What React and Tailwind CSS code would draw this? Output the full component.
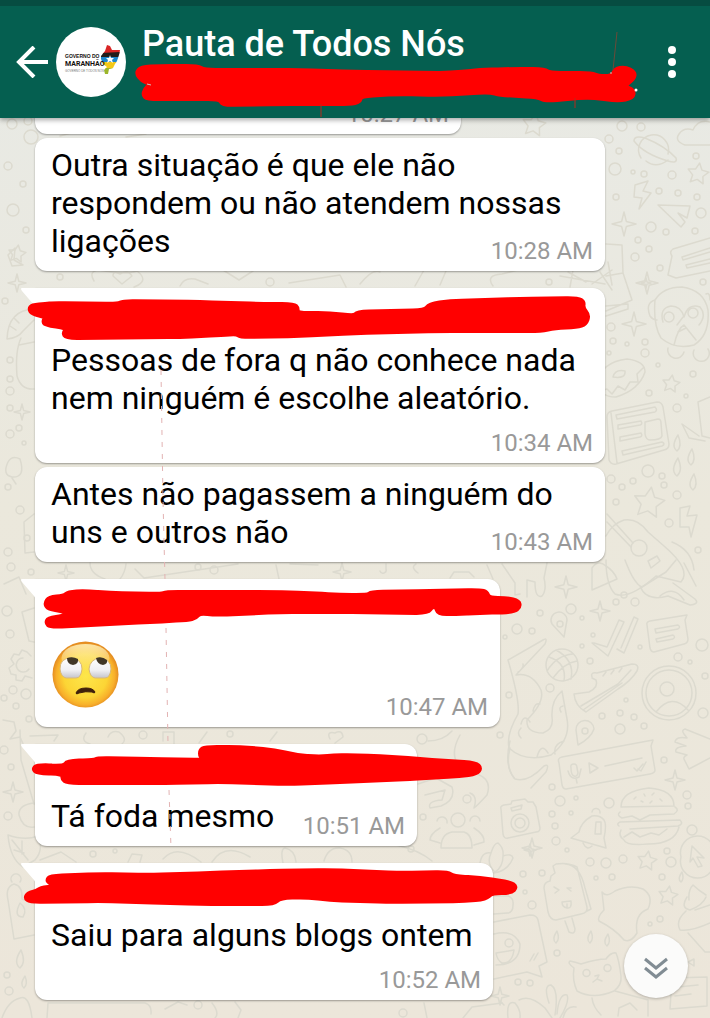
import React from 'react';

const CIRCLES = [
  [622,126,5],[641,127,4],[609,139,4],[619,151,3],[615,169,6],[633,172,2],[644,174,3],[672,175,4],[696,156,3],[659,191,3],[678,193,3],[616,197,3],[697,197,3],[701,213,5],[651,227,5],[666,232,3],[695,231,3],[638,240,3],[649,249,3],[635,257,4],[660,268,3],[703,282,3],[611,327,4],[627,344,2],[613,341,3],[645,342,3],[645,353,4],[609,353,2],[658,365,2],[693,374,3],[649,393,3],[686,396,2],[677,408,4],[648,471,6],[662,476,3],[611,479,4],[622,487,3],[633,481,3],[664,485,3],[677,495,4],[616,502,3],[669,523,4],[698,550,3],
  [624,595,3],[635,602,4],[616,602,3],[571,609,5],[540,613,3],[582,618,2],[517,629,5],[532,631,3],[505,637,2],[593,635,2],[640,647,2],[582,646,2],[590,661,3],[678,657,4],[690,662,2],[702,645,6],[550,688,4],[509,695,3],[626,700,2],[602,716,3],[620,713,3],[634,717,3],[620,729,5],[644,726,3],[703,713,5],[664,760,3],[552,787,3],[705,676,3],
  [560,801,5],[576,798,2],[609,803,5],[552,814,3],[571,813,2],[555,826,3],[556,841,4],[567,850,2],[523,874,3],[542,873,3],[590,862,4],[606,863,5],[623,859,4],[671,862,5],[667,851,3],[596,878,2],[612,877,3],[662,877,3],[532,905,4],[660,919,3],[650,924,2],[557,953,3],[518,982,3],[530,983,3],[687,795,4],[692,830,5],[688,806,3],
  [491,704,3],[417,709,3],[422,739,5],[500,735,3],[467,799,4],[423,817,3],[411,849,3],[525,892,2],
  [12,124,5],[28,121,4],[31,137,7],[8,166,4],[23,184,3],[13,210,6],[26,230,3],[5,301,3],[10,360,3],[10,379,3],[10,391,4],[10,408,3],[19,428,3],[10,434,4],[24,443,2],[8,487,3],[20,510,4],[27,538,3],[8,552,4],[11,567,4],[31,572,3],[7,611,5],[10,634,4],[13,690,4],[26,694,5],[4,698,3],[16,706,3],[29,719,3],[4,750,4],[11,767,3],[8,816,4],[7,975,3],[9,991,4],[93,854,3],[115,851,2],[198,567,3],[230,734,3],[214,570,4],[270,282,4],[549,282,3],[198,1005,4],[403,1013,4],[60,277,3],[143,735,4],
];
const SPARKS = [[624,224,12],[647,283,11],[634,324,12],[566,587,11],[600,611,10],[532,848,10],[675,780,10],[13,792,10],[17,283,9],[66,573,8],[342,572,9],[530,850,6],[500,996,9],[646,283,5],[22,412,8]];
const STARS = [[698,174,11],[671,384,9],[649,503,16],[647,861,10],[668,896,10],[534,125,12],[17,254,9]];
const DROPS = [[677,443,8],[677,467,9],[691,457,8],[693,482,8],[556,937,6],[590,937,6],[607,940,6],[681,877,5],[20,959,9],[24,982,6]];

const spark = (x, y, r) => {
  const k = r * 0.2;
  return `M${x} ${y - r}L${x + k} ${y - k}L${x + r} ${y}L${x + k} ${y + k}L${x} ${y + r}L${x - k} ${y + k}L${x - r} ${y}L${x - k} ${y - k}Z`;
};
const star = (x, y, r) => {
  const pts = [];
  for (let i = 0; i < 10; i++) {
    const a = -Math.PI / 2 + 0.15 + (i * Math.PI) / 5;
    const q = i % 2 ? r * 0.5 : r;
    pts.push(`${(x + q * Math.cos(a)).toFixed(1)} ${(y + q * Math.sin(a)).toFixed(1)}`);
  }
  return `M${pts.join('L')}Z`;
};
const drop = (x, y, r) => `M${x + 1} ${y - r}Q${x + r * 0.7} ${y + r * 0.4} ${x} ${y + r}Q${x - r * 0.8} ${y + r * 0.4} ${x + 1} ${y - r}Z`;

// Turns a polygon outline into one with softened corners.
const soften = (d) => {
  const pts = d.replace(/[MHZ]/g, '').split('L').map((p) => p.trim().split(' ').map(Number));
  const toward = (a, b) => {
    const len = Math.hypot(b[0] - a[0], b[1] - a[1]);
    const t = Math.min(0.5, 12 / len);
    return `${(a[0] + (b[0] - a[0]) * t).toFixed(1)} ${(a[1] + (b[1] - a[1]) * t).toFixed(1)}`;
  };
  return (
    pts
      .map((p, i) => {
        const prev = pts[(i + pts.length - 1) % pts.length];
        const next = pts[(i + 1) % pts.length];
        return `${i ? 'L' : 'M'}${toward(p, prev)}Q${p[0]} ${p[1]} ${toward(p, next)}`;
      })
      .join('') + 'Z'
  );
};

const DOODLES = [
  // planet ring and cloud
  'M641 158A15 15 0 1 1 668 154M646 161Q656 169 668 160',
  'M634 141Q634 135 645 138Q665 146 676 158Q678 164 668 161Q644 154 634 141Z',
  'M710 145L685 145Q674 141 679 134Q684 127 693 130Q698 119 710 122',
  // bolts and paper plane
  'M635 185L648 181L643 191L651 193L639 209L642 198L634 197Z',
  'M680 508L690 506L687 516L697 515L691 537L689 527L680 527Z',
  'M658 205L690 206L687 218L678 213L685 222L681 227Z',
  // chat note
  'M710 238L673 249Q669 252 672 256L668 275L676 278L710 271M682 257L710 248Q712 251 710 252L683 260ZM686 265L710 259Q712 261 710 263L687 268Z',
  // gift box
  'M606 244L622 245L623 273L606 276M623 273L632 300L606 311M606 306L628 304V309L606 316M592 284L612 270M600 272L612 290M608 262L612 285',
  // monkey
  'M655 300Q663 287 682 287Q704 290 708 310Q710 335 694 345Q675 350 661 338Q653 325 655 300ZM655 300Q645 303 650 316Q653 320 657 320M706 294Q710 292 710 300',
  'M663 322Q659 308 671 306Q681 306 684 317Q688 303 700 307Q707 315 699 325M683 317L677 325M674 345Q678 328 684 325L696 340M678 332L686 328M668 348A8 8 0 1 0 684 352M694 350A8 8 0 1 0 708 349',
  // donut
  'M597 382Q602 362 627 359Q645 361 645 372Q639 390 616 397Q599 397 597 382ZM613 377Q615 369 625 371Q626 379 613 377ZM600 391L607 389L612 394L618 386L625 390L630 382L638 382L637 374L643 368',
  // newspaper
  'M607 417Q607 412 612 411L657 402Q662 402 663 407L669 444Q669 449 664 450L616 464Q611 465 609 460ZM611 413L617 463M616 415L655 407Q658 410 655 412L617 419ZM645 422L658 419Q661 419 661 423L662 436Q661 440 650 440Q646 440 645 434ZM618 425L641 421Q643 424 640 425L618 429ZM620 437L641 433Q643 436 640 437L620 441ZM622 451L662 442Q666 444 662 446L623 455Z',
  // mug
  'M710 397L698 402L702 436L710 438M699 436L682 424L689 438L705 441',
  // guitar
  'M607 514L633 543M607 522L631 547M606 536Q612 524 624 520Q638 518 648 532L664 546Q692 570 681 582L656 576Q629 600 615 594Q606 585 606 560M648 561L657 556L660 561L651 568ZM672 542Q692 550 694 570',
  // bell, jacket
  'M592 590L592 568Q598 559 606 566Q614 571 617 579Z',
  'M502 564L515 583V595L520 594M547 563L544 578Q547 590 542 596Q535 599 535 582L527 580L527 597',
  'M625 560Q634 584 642 587L666 572L676 560M640 586Q646 602 668 596L690 605Q700 604 695 599L673 583M660 596Q674 585 684 600M684 563L696 586',
  // location pins
  'M564 637L552 624A8 8 0 1 1 567 620Z',
  'M578 745L576 730A9 9 0 1 1 594 729Q591 738 578 745Z',
  // check marks and message
  'M592 643L608 656L624 622L619 620L607 647L594 643ZM617 649L624 653L638 619L634 617L621 648',
  'M647 625Q646 622 650 621L687 615L685 620L688 639Q688 643 684 644L654 652Q651 652 650 648ZM655 629L678 625Q681 627 678 629L656 633ZM656 639L673 635Q676 637 673 639L657 642Z',
  // basketball
  'M546 665A16 16 0 1 1 578 665A16 16 0 1 1 546 665ZM556 650Q575 660 571 679M549 657Q567 663 564 681M573 654Q557 655 547 671M577 661Q564 663 553 678',
  // sneaker
  'M592 677Q590 672 597 673L632 664Q640 664 637 671Q631 681 618 689L586 712Q575 706 574 694L589 692Q599 687 596 680L592 678M581 706L618 684L631 670M583 710L622 683M603 676L606 672M611 674L614 670M619 672L622 668',
  // contact
  'M642 693A27 27 0 1 1 696 693A27 27 0 1 1 642 693ZM646 693A23 23 0 1 1 692 693A23 23 0 1 1 646 693ZM660 689A7 7 0 1 1 674 689A7 7 0 1 1 660 689ZM656 712Q672 692 688 710',
  // dragon tail
  'M508 660L543 640Q548 637 545 644L516 675Q532 672 541 690Q545 702 527 720Q526 733 543 733Q554 729 552 717Q551 700 562 691L567 719Q571 740 551 755Q525 763 509 748Q506 735 518 714Q520 701 508 660ZM510 748Q505 768 515 779Q528 783 544 766Q550 763 546 772L531 788M518 672Q524 668 523 664M533 711Q535 702 540 704M521 724Q524 713 530 722M521 738Q516 733 521 728M561 712Q558 707 563 706M555 754Q553 744 564 741M537 757Q541 742 548 753',
  // voice message
  'M559 763Q557 758 562 757L653 740L651 746L655 770Q655 773 650 774L566 789Q563 789 562 785ZM571 768Q570 764 574 764Q577 764 577 768L578 773Q577 777 574 776Q571 775 571 768ZM568 771Q571 781 579 777L581 769M576 778L577 783M589 763L598 768L590 773ZM605 766L642 758M634 768L637 771L643 764M638 769L641 771L646 762',
  // hand
  'M710 739L685 729Q681 730 684 734L687 738Q676 736 675 742L686 746Q674 747 676 752L687 755Q682 757 685 761L689 769L710 758',
  // camera
  'M501 809Q500 806 504 805L511 804L512 801L525 799L528 802L533 802L536 807L540 828Q540 832 536 832L508 838Q504 839 503 834ZM511 823A9 9 0 1 1 529 823A9 9 0 1 1 511 823ZM515 823A5 5 0 1 1 525 823A5 5 0 1 1 515 823ZM511 808L522 805L521 809L512 811Z',
  // bell
  'M592 816Q581 822 579 832L571 838L606 848L604 838Q607 824 604 820Q600 815 592 816ZM592 812A4 4 0 1 1 600 813M596 822L601 822L601 834L595 834ZM583 843Q587 851 592 846',
  // burger
  'M621 807Q621 791 649 788Q674 790 674 806ZM620 812Q616 815 622 818L632 816L640 820L650 815L674 814Q680 810 675 807M619 826Q616 824 620 822L680 820Q684 824 678 826L630 829M621 830Q618 836 624 840Q626 846 648 844Q675 844 679 827M624 837L632 832L640 837L651 833L659 835L667 829M636 797L634 799M644 794L645 796M654 793L652 795M641 801L643 802M652 801L650 803M660 799L662 801',
  // upload badge
  'M681 857A17 17 0 1 1 714 857A17 17 0 1 1 681 857ZM690 862L692 846L704 858L697 857L702 866L698 867L693 858Z',
  // popsicle
  'M553 866L556 864Q568 862 577 867L587 907Q588 913 581 914L556 920Q550 920 548 912L544 888Q544 882 550 881L551 876L555 873ZM565 864Q580 865 585 888L591 909L587 911M565 921L569 932Q575 935 575 929L572 918M554 887L559 890L555 893M571 888L567 888L571 891M562 902L571 901Q572 909 567 908Q562 907 562 902ZM567 904V907',
  // shape
  'M602 892Q606 898 615 891Q630 884 643 889Q654 896 648 909Q634 914 637 933Q631 943 624 940Q615 929 599 921Q597 917 604 910Z',
  // cupcake
  'M689 900Q688 890 693 885Q698 890 706 895M687 897Q680 908 690 910Q703 905 706 897M686 911Q675 921 680 930Q690 932 710 923M688 933L705 952L710 952M695 910L710 905',
  // cat
  'M574 968Q567 963 570 961Q575 962 581 964Q597 959 606 959Q611 952 616 953Q619 960 621 976Q622 985 614 991Q593 1000 577 991Q572 980 574 968ZM583 973A3 3 0 1 1 590 973A3 3 0 1 1 583 973ZM604 968A3 3 0 1 1 611 968A3 3 0 1 1 604 968ZM595 976L599 975L597 979L593 982M597 979L602 981M592 998Q593 1007 601 1015M615 991Q637 997 648 1000V1016M618 1016L619 1008L630 1003L637 1010',
  // small notes
  'M672 978L707 977V1006L670 1009ZM678 987L698 985M675 996L691 994M688 962L694 959V966Z',
  // plant
  'M500 1001L504 1005M508 1018Q506 1000 515 1003Q521 1010 520 1018M519 1000Q530 994 545 1008L552 1018M549 1003Q543 985 551 985Q559 990 555 1015M557 1014Q559 993 567 995Q570 1001 560 1018M563 1018Q566 1005 576 1007',
  // laughing sticker
  'M494 922L530 915Q537 915 538 920L547 962L539 966L542 977L527 972L494 979M494 934Q514 929 520 944Q520 965 496 965M505 943A4 4 0 1 1 513 943A4 4 0 1 1 505 943ZM496 953L514 950Q512 964 502 963Q497 960 496 953ZM530 961L534 954M534 960L538 953',
  'M494 896H508Q514 898 513 905Q513 913 507 913L494 914',
  // group
  'M441 848Q441 834 452 832H464Q472 834 472 848ZM451 820A7 7 0 1 1 465 820A7 7 0 1 1 451 820ZM437 821A5 5 0 1 1 447 823M440 828Q430 834 430 840L440 843M470 821A5 5 0 1 1 480 821M474 828Q485 835 484 842L474 845',
  // lotus
  'M480 863Q482 851 491 853Q494 843 498 843Q504 848 503 856Q512 853 513 858Q508 871 494 873Q482 872 480 863ZM491 853Q486 864 495 872M503 856Q503 867 495 872',
  // octopus and cat fragments near the middle
  'M418 784L436 778L452 787Q456 800 441 806L430 808Q427 801 442 800L445 790L425 795M460 735Q446 760 467 772Q494 775 487 795Q477 806 474 808Q478 796 470 793M510 741Q504 765 514 778',
  'M452 731Q443 741 428 741M396 845Q419 850 432 861M283 863Q280 849 285 848Q295 850 296 862M324 861Q328 847 340 848Q352 850 352 862',
  // left margin
  'M8 255L15 248L14 260L23 265L12 266Z',
  'M34 309Q8 310 7 339Q18 338 23 331L34 320M10 326L16 330M14 318L19 323M21 338Q15 351 17 376Q21 390 34 389M19 345L34 342',
  'M8 462Q12 455 20 459Q26 478 12 477Q2 475 8 462ZM12 478L16 484',
  'M34 514L24 522L25 553L34 552M4 584L19 577L26 594M22 612L34 608M22 612L29 641L34 642',
  'M22 650L27 652L31 656M22 650L19 655L14 654L11 659L14 664L9 668L11 674L16 675L16 680L22 681L25 676L32 678M23 658A7 7 0 1 0 29 669M3 720L14 722L16 731L10 739L20 737L24 746M30 736L58 735L54 741',
  'M34 803Q18 805 19 815Q23 829 34 827M8 835Q25 841 38 836Q44 850 35 860L23 867Q10 859 8 835ZM12 840L28 860M14 850L24 853M22 841L22 854M20 730L21 760L34 804',
  'M8 900Q5 887 14 884Q23 886 22 899L34 903M8 900L14 939L34 935M12 882A5 5 0 1 1 20 882M20 903Q28 909 23 917Q13 917 20 903Z',
  'M2 1018Q8 1001 20 998Q29 994 32 1018M47 1018L48 1003H145Q152 1005 151 1014M165 1009L178 1002L187 1005M212 1003Q220 1013 215 1018M235 1002L241 1010L238 1018M427 1018L424 1003M463 1018L472 1007L502 1003',
  // fragments between bubbles
  'M60 136L75 132M126 137L146 134M94 281Q88 271 99 270Q126 275 137 271Q150 281 134 287M113 276Q113 270 120 274Q128 269 132 276L122 284ZM180 286Q184 277 195 279L208 284M223 270L239 280L253 271M289 283L340 275L346 287M360 284Q373 268 380 272M415 286L424 270M440 285L446 271M493 286Q485 275 502 274L518 270M560 276L605 284M568 272L586 282M573 270L570 287',
  'M90 563Q90 574 105 579M126 564Q125 573 120 579M135 569L144 578L238 564M276 565L279 579M290 564L318 565M380 571A3 3 0 1 0 386 569L386 564M418 573Q410 567 416 564M450 578L454 572H469L474 577M487 565L493 579',
  'M86 733Q80 741 90 744M108 737Q111 730 119 732Q128 739 122 744M163 741V732H174V744M199 743L207 732M330 739Q326 731 335 733Q342 729 343 737L335 743M270 741L277 732M40 860L61 852L76 862M128 862L132 854L142 855L140 862M163 859Q177 843 201 862M212 862Q225 842 250 857',
];

function Wallpaper() {
  return (
    <svg aria-hidden="true" className="absolute inset-0 h-full w-full" viewBox="0 0 710 1018" preserveAspectRatio="xMidYMin slice">
      <g fill="none" stroke="#dcdacf" strokeWidth="1.5" strokeLinecap="round" strokeLinejoin="round">
        {CIRCLES.map(([x, y, r], i) => <circle key={i} cx={x} cy={y} r={r} />)}
        {SPARKS.map((s, i) => <path key={i} d={spark(...s)} />)}
        {STARS.map((s, i) => <path key={i} d={star(...s)} />)}
        {DROPS.map((s, i) => <path key={i} d={drop(...s)} />)}
        <circle cx="669" cy="317" r="5" />
        <circle cx="693" cy="313" r="5" />
        <circle cx="639" cy="548" r="8" />
        <circle cx="560" cy="624" r="3" />
        <circle cx="585" cy="731" r="3" />
        {DOODLES.map((d, i) => <path key={i} d={d} />)}
      </g>
    </svg>
  );
}

function Scribble({ box, d, children }) {
  const [, , w, h] = box.split(' ');
  return (
    <svg aria-hidden="true" className="pointer-events-none absolute left-0 top-0 z-10 max-w-none overflow-visible" width={w} height={h} viewBox={box}>
      <path d={soften(d)} fill="#ff0000" stroke="#ff0000" strokeWidth="4" strokeLinejoin="round" />
      {children}
    </svg>
  );
}

function Time({ children }) {
  return <time className="self-end justify-self-end whitespace-nowrap text-2xl leading-6 text-[#999999] [grid-area:1/1]">{children}</time>;
}

function Bubble({ width, scribble, time, ownLine, className = '', children }) {
  return (
    <article className={`relative max-w-full rounded-xl bg-white pb-2 pl-4 pr-3 pt-2 shadow-[0_1px_2px_rgba(0,0,0,0.35)] ${scribble ? 'rounded-tl-none' : ''} ${width} ${className}`}>
      {scribble && (
        <>
          <svg aria-hidden="true" className="absolute -left-3.5 top-0" width="15" height="20" viewBox="0 0 15 20">
            <path d="M1 0H15V20L13 17L1 3Q-1 0 1 0Z" fill="#fff" />
          </svg>
          <div className="h-[45px]" />
          <Scribble {...scribble} />
        </>
      )}
      <div className="grid">
        <div className={`[grid-area:1/1] ${ownLine ? 'pb-[38px]' : 'pb-[3px]'}`}>{children}</div>
        <Time>{time}</Time>
      </div>
    </article>
  );
}

function EyeRoll() {
  return (
    <svg role="img" aria-label="🙄" className="mb-2 mt-[9px] block" width="68" height="67" viewBox="-1 0 68 67">
      <defs>
        <radialGradient id="face" cx="50%" cy="52%" r="50%">
          <stop offset="0" stopColor="#fde64b" />
          <stop offset="0.65" stopColor="#fcd535" />
          <stop offset="0.88" stopColor="#f8b02b" />
          <stop offset="1" stopColor="#e58e22" />
        </radialGradient>
        <linearGradient id="shine" x1="0" y1="0" x2="0" y2="1">
          <stop offset="0" stopColor="#fff3bd" stopOpacity="0.85" />
          <stop offset="1" stopColor="#fff3bd" stopOpacity="0" />
        </linearGradient>
        <linearGradient id="eye" x1="0" y1="0" x2="0" y2="1">
          <stop offset="0" stopColor="#fff" />
          <stop offset="0.6" stopColor="#f0f0f3" />
          <stop offset="1" stopColor="#c4c4cc" />
        </linearGradient>
      </defs>
      <circle cx="33.5" cy="33.5" r="33" fill="url(#face)" />
      <ellipse cx="33.5" cy="17" rx="24" ry="14" fill="url(#shine)" />
      <path d="M8 28Q8 17 19 17Q30 18 30 28Q29 37 24 37H14Q9 36 8 28Z" fill="url(#eye)" stroke="#d9b878" />
      <path d="M37 28Q38 18 48 17Q59 18 59 28Q58 37 53 37H43Q38 36 37 28Z" fill="url(#eye)" stroke="#d9b878" />
      <path d="M15 17Q21 15 26 18Q27 23 21 24Q15 23 15 17Z" fill="#403626" />
      <path d="M44 17Q50 15 55 19Q56 23 51 24Q45 23 44 17Z" fill="#403626" />
      <path d="M24 52Q26 47 34 47Q41 47 43 51Q43 53 40 51Q34 50 27 52Q24 54 24 52Z" fill="#40200b" stroke="#40200b" />
    </svg>
  );
}

function Avatar() {
  return (
    <svg role="img" aria-label="Governo do Maranhão" className="shrink-0" width="70" height="70" viewBox="56 27 70 70">
      <circle cx="91" cy="62" r="35" fill="#fff" />
      <clipPath id="map"><path d="M101 56L105 51L107 45L110 46L112 50L120 50L119 55L117 61L115 64L113 68L109 69L108 74L105 74L104 70L107 67L103 64L101 59Z" /></clipPath>
      <g clipPath="url(#map)">
        <rect x="100" y="44" width="22" height="10" fill="#d92525" />
        <path d="M100 53L121 52V57L100 57Z" fill="#221d1b" />
        <rect x="100" y="57" width="22" height="6" fill="#1d86cc" />
        <rect x="100" y="62" width="22" height="7" fill="#f3c818" />
        <rect x="100" y="68" width="22" height="7" fill="#9bb52a" />
      </g>
      <path d="M110 55L111 58L114 58L112 60L113 63L110 61L107 63L108 60L106 58L109 58Z" fill="#fff" />
      <g fill="#15110f">
        <text x="65" y="57.5" fontSize="5" fontFamily="Liberation Sans, sans-serif" fontWeight="700">GOVERNO DO</text>
        <text x="65" y="66" fontSize="7" fontFamily="Roboto, sans-serif" fontWeight="700">MARANHÃO</text>
        <text x="65" y="72" fontSize="3" fontFamily="Liberation Sans, sans-serif" fill="#777">GOVERNO DE TODOS NÓS</text>
      </g>
    </svg>
  );
}

export default function App() {
  return (
    <div className="relative flex min-h-screen flex-col overflow-hidden bg-linear-to-b from-[#e8eae6] via-[#ebe8dc] to-[#ece6da] font-[Roboto,sans-serif]">
      <Wallpaper />
      <header className="relative z-20 border-t-[6px] border-[#064c41] bg-[#055f50] shadow-[0_2px_5px_rgba(0,0,0,0.35)]">
        <div className="flex h-28 items-center pl-4 pr-6">
          <button type="button" aria-label="Voltar" className="mr-2 shrink-0">
            <svg width="32" height="32" viewBox="0 0 32 32" fill="none" stroke="#fff" strokeWidth="4">
              <path d="M32 16H3M18 1L3 16L18 31" />
            </svg>
          </button>
          <Avatar />
          <div className="ml-4 min-w-0 flex-1">
            <h1 className="whitespace-nowrap text-4xl font-medium leading-[42px] text-white">Pauta de Todos Nós</h1>
            <div className="relative h-9">
              <Scribble
                box="142 65 480 36"
                d="M136 73L141 67L160 66L198 66L204 70L300 70L355 72L450 73L480 70L510 69L545 69L549 73L592 73L598 76L612 76L615 69L625 67L635 72L634 79L624 86L634 90L633 98L618 101L590 97L545 101L538 97L500 95L490 92L440 95L400 94L361 96L360 102L350 104L280 104L222 105L220 99L147 99L143 95L145 89L150 84L142 81Z"
              >
                <path d="M617 32L613 70" fill="none" stroke="#6b4a38" />
                <path d="M321 104V117M575 98V108" fill="none" stroke="#b52a1c" />
                <circle cx="636" cy="90" r="1.5" fill="#fff" />
                <path d="M147 84L151 85M610 73H612" stroke="#cfc6c0" />
              </Scribble>
            </div>
          </div>
          <button type="button" aria-label="Mais opções" className="flex w-12 shrink-0 justify-end pr-2.5">
            <svg width="8" height="32" viewBox="0 0 8 32" fill="#fff">
              <circle cx="4" cy="4" r="4" />
              <circle cx="4" cy="16" r="4" />
              <circle cx="4" cy="28" r="4" />
            </svg>
          </button>
        </div>
      </header>

      <main className="relative flex flex-1 flex-col items-start gap-[17px] pb-[18px] pl-[35px] pr-4 text-[32px] leading-[38px] text-black">
        <Bubble width="w-[426px]" time="10:27 AM" className="-mb-[13px] -mt-[41px]"><p>&nbsp;</p></Bubble>
        <Bubble width="w-[570px]" time="10:28 AM"><p>Outra situação é que ele não respondem ou não atendem nossas ligações</p></Bubble>
        <Bubble
          width="w-[570px]"
          time="10:34 AM"
          ownLine
          className="-mb-[13px]"
          scribble={{ box: '35 288 570 60', d: 'M29 309L32 305L46 304L53 303L118 304L123 301L200 302L262 304L294 304L298 308L297 313L330 313L354 316L357 312L425 310L429 304L450 301L520 299L578 298L584 302L583 308L589 315L586 324L577 327L555 328L541 331L440 331L355 333L300 336L240 337L237 334L222 335L180 337L66 338L63 333L67 328L45 325L43 321L46 317L32 314Z' }}
        >
          <p>Pessoas de fora q não conhece nada nem ninguém é escolhe aleatório.</p>
        </Bubble>
        <Bubble width="w-[570px]" time="10:43 AM"><p>Antes não pagassem a ninguém do uns e outros não</p></Bubble>
        <Bubble
          width="w-[465px]"
          time="10:47 AM"
          scribble={{ box: '35 579 465 60', d: 'M45 603L49 597L64 596L68 592L85 591L110 593L161 594L166 592L270 592L310 593L340 595L368 595L371 592L430 591L480 590L487 592L489 598L507 598L519 601L520 607L514 612L480 613L455 614L438 614L436 607L432 607L428 613L340 612L280 612L215 615L200 613L196 618L188 620L150 622L50 627L46 623L48 618L64 616L66 612L55 610L47 608Z' }}
        >
          <EyeRoll />
        </Bubble>
        <Bubble
          width="w-[382px]"
          time="10:51 AM"
          scribble={{ box: '35 744 382 60', d: 'M33 769L37 765L64 766L67 761L95 760L97 758L150 759L206 760L200 757L200 750L205 747L240 747L275 750L295 755L320 757L335 755L380 756L420 759L476 763L481 768L477 774L460 776L410 779L340 782L290 784L220 782L165 783L120 783L67 783L62 779L63 774L37 773Z' }}
        >
          <p>Tá foda mesmo</p>
        </Bubble>
        <Bubble
          width="w-[458px]"
          time="10:52 AM"
          ownLine
          scribble={{ box: '35 863 458 60', d: 'M47 880L50 876L100 874L150 875L210 873L270 871L330 870L400 873L448 872L453 876L480 878L510 882L517 887L511 893L492 893L486 899L465 901L390 902L330 900L306 897L280 898L274 904L200 904L140 902L100 901L30 902L25 898L28 893L37 891L40 888L56 886L49 883Z' }}
        >
          <p>Saiu para alguns blogs ontem</p>
        </Bubble>
        <svg aria-hidden="true" className="pointer-events-none absolute left-0 top-0 overflow-visible" width="200" height="740" viewBox="0 118 200 740">
          <path d="M161 370L163 500L165 580M166 628L168 744M169 790L171 848" fill="none" stroke="#e3b3b3" strokeDasharray="5 7" />
        </svg>
      </main>

      <button type="button" aria-label="Ir para o fim" className="absolute bottom-5 right-[22px] z-20 flex h-16 w-16 items-center justify-center rounded-full bg-[#fbfbfa] shadow-[0_1px_3px_rgba(0,0,0,0.25)]">
        <svg width="24" height="22" viewBox="0 0 24 22" fill="none" stroke="#818c93" strokeWidth="3" className="mt-1">
          <path d="M1 2L12 11L23 2M1 11L12 20L23 11" />
        </svg>
      </button>
    </div>
  );
}
